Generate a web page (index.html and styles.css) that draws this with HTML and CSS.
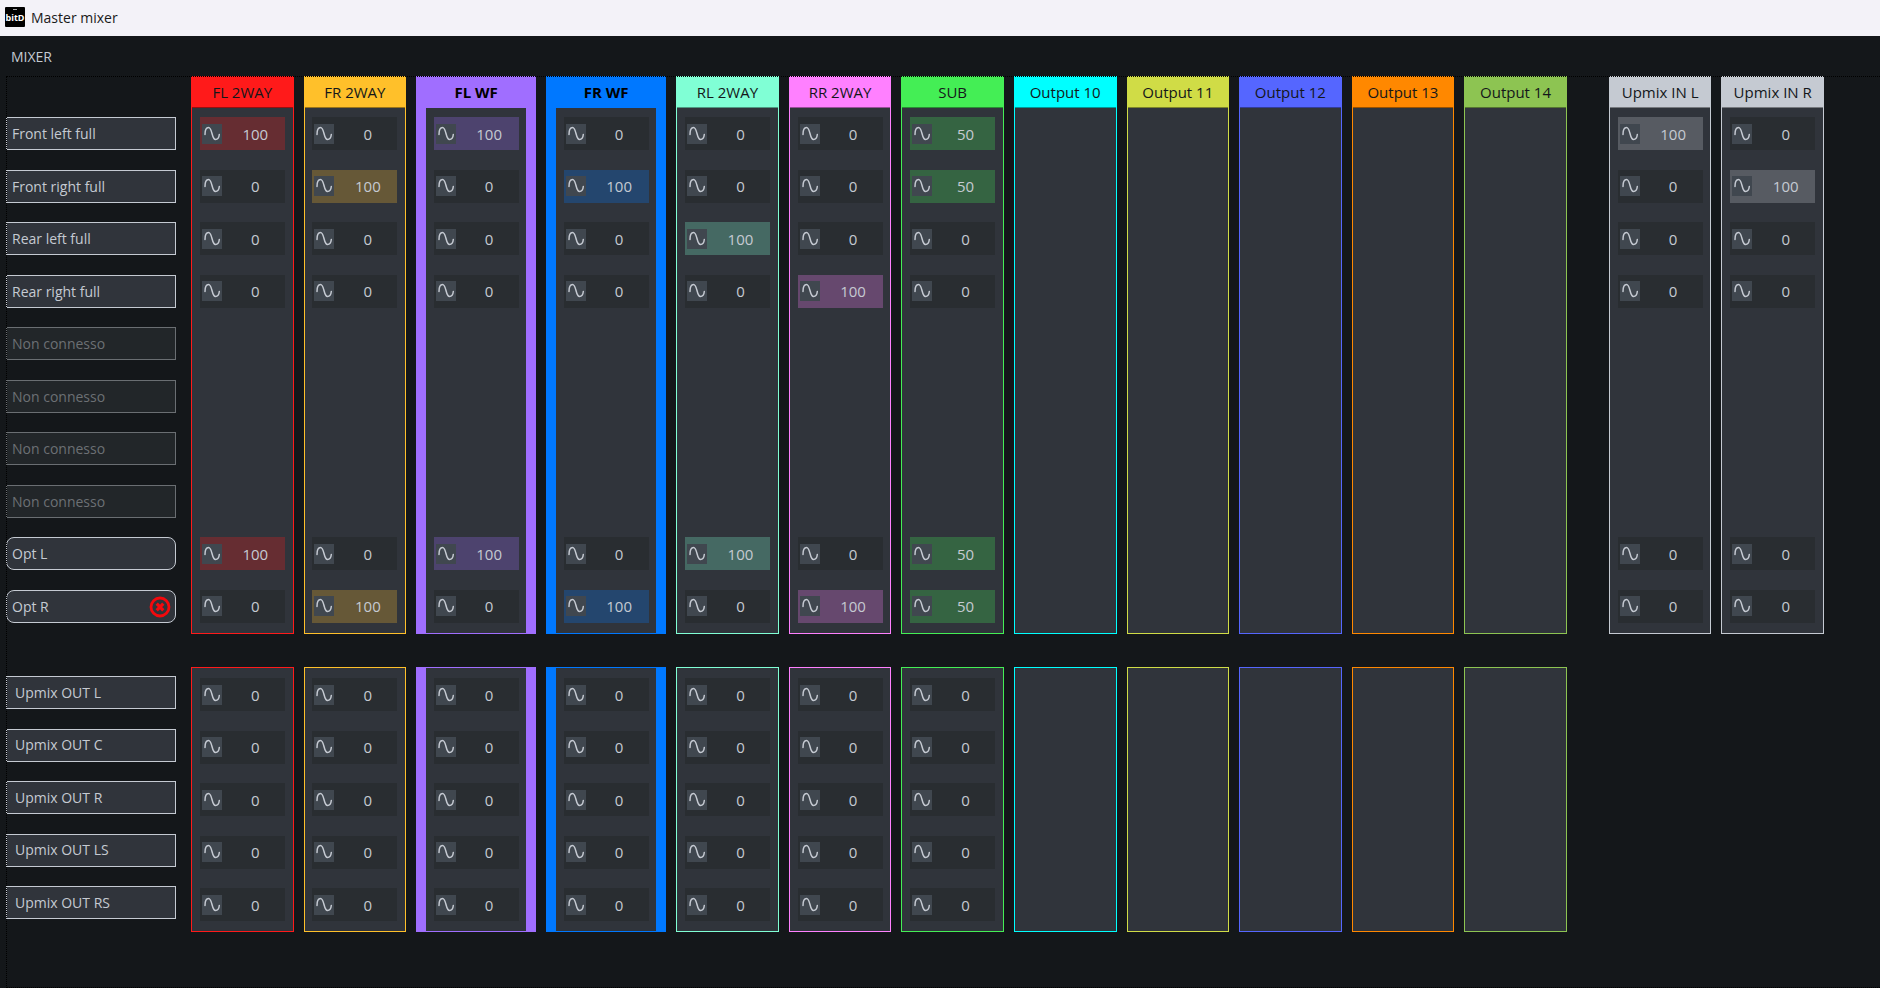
FILE: index.html
```html
<!DOCTYPE html>
<html lang="it">
<head>
  <meta charset="UTF-8" />
  <meta name="viewport" content="width=device-width, initial-scale=1.0" />
  <title>Master mixer</title>
  <link rel="stylesheet" href="styles.css">
</head>
<body>

  <!-- Window title bar -->
  <header class="titlebar">
    <svg class="logo" viewBox="0 0 20 20" role="img" aria-label="bitD">
      <rect width="20" height="20" rx="1" fill="#000" />
      <path d="M8 2.5h4" stroke="#aaa" />
      <text x="10" y="14" text-anchor="middle" class="logo-text">bitD</text>
    </svg>
    <span class="window-name">Master mixer</span>
  </header>

  <main class="window">
    <h1 class="title">MIXER</h1>
    <div class="mixer">
      <section class="matrix inputs" id="inputs">
        <div class="labels">
          <div class="label">Front left full</div>
          <div class="label">Front right full</div>
          <div class="label">Rear left full</div>
          <div class="label">Rear right full</div>
          <div class="label off">Non connesso</div>
          <div class="label off">Non connesso</div>
          <div class="label off">Non connesso</div>
          <div class="label off">Non connesso</div>
          <div class="label opt">Opt L</div>
          <div class="label opt">Opt R
            <button class="remove" aria-label="Remove Opt R">
              <svg viewBox="0 0 22 22">
                <circle cx="11" cy="11" r="9" fill="none" stroke="#f5090d" stroke-width="2.8" />
                <path d="M7.7 7.7l6.6 6.6M14.3 7.7l-6.6 6.6" stroke="#f5090d" stroke-width="3.2" />
              </svg>
            </button>
          </div>
        </div>
      </section>

      <section class="matrix upmix" id="upmix">
        <div class="labels">
          <div class="label">Upmix OUT L</div>
          <div class="label">Upmix OUT C</div>
          <div class="label">Upmix OUT R</div>
          <div class="label">Upmix OUT LS</div>
          <div class="label">Upmix OUT RS</div>
        </div>
      </section>
    </div>
  </main>

  <script src="script.js"></script>
</body>
</html>
```

FILE: styles.css
```css
* {
  box-sizing: border-box;
}

body {
  margin: 0;
  min-height: 100vh;
  display: flex;
  flex-direction: column;
  background-color: #14171a;
  color: #c5cad2;
  font-family: "Open Sans", "Noto Sans", sans-serif;
  font-size: 14px;
  line-height: 20px;
}

/* Title bar */
.titlebar {
  display: flex;
  align-items: center;
  gap: 6px;
  height: 36px;
  padding: 0 5px 2px;
  background-color: #f3f2f8;
  color: #1a1a1a;
}

.window-name {
  padding-top: 2px;
}

.logo {
  width: 20px;
  height: 20px;
}

.logo-text {
  fill: #fff;
  font-size: 9px;
  font-weight: bold;
}

.window {
  flex: 1;
  display: flex;
  flex-direction: column;
}

.title {
  margin: 0;
  padding: 11px 11px 9px;
  font-size: 14px;
  font-weight: normal;
}

/* Mixer area with its dotted outline on top */
.mixer {
  flex: 1;
  position: relative;
  margin-left: 6px;
}

.mixer::after {
  content: "";
  position: absolute;
  inset: 0;
  border: 1px dotted #000;
  border-right: none;
  pointer-events: none;
}

.matrix {
  display: grid;
  grid-template-columns: 175px repeat(2, 1fr) 120px 120px repeat(8, 1fr) 22px repeat(2, 1fr);
  column-gap: 10px;
  margin-right: 56px;
}

.inputs {
  height: 558px;
}

.upmix {
  height: 265px;
  margin-top: 33px;
}

/* Source names on the left */
.labels {
  display: flex;
  flex-direction: column;
  justify-content: space-between;
  padding: 41px 5px 11px 0;
}

.upmix .labels {
  padding: 9px 5px 13px 0;
}

.label {
  display: flex;
  align-items: center;
  justify-content: space-between;
  height: 33px;
  padding: 1px 4px 0 5px;
  border: 1px solid #c5cad2;
  background-color: #30343b;
}

.upmix .label {
  padding: 0 8px;
}

.label.off {
  border-color: #6a6e72;
  background-color: #222629;
  color: #6c7074;
}

.label.opt {
  border-radius: 8px;
}

.remove {
  width: 22px;
  height: 22px;
  padding: 0;
  border: none;
  background: none;
}

.remove svg {
  display: block;
}

/* Output channels */
.channel {
  display: flex;
  flex-direction: column;
  min-width: 0;
  border: 1px solid var(--color);
  background-color: #30343b;
}

.channel.selected {
  border-width: 1px 10px;
}

.channel.aux {
  grid-column-start: 15;
}

.name {
  height: 31px;
  padding: 5px 0;
  border-bottom: 1px solid rgba(0, 0, 0, 0.4);
  background-color: var(--color);
  color: #14171a;
  font-size: 15px;
  text-align: center;
}

.selected .name {
  border-bottom: none;
  color: #000;
  font-weight: bold;
}

.cells {
  flex: 1;
  display: flex;
  flex-direction: column;
  align-items: center;
  justify-content: space-between;
  padding: 9px 0 10px;
}

.upmix .cells {
  padding: 10px 0;
}

.cell {
  display: flex;
  align-items: center;
  width: 85px;
  height: 33px;
  padding-left: 2px;
  background-color: #292d31;
}

.cell.active {
  background-color: color-mix(in srgb, var(--color) 26%, #30343b);
}

.cell.empty {
  visibility: hidden;
}

.phase {
  width: 20px;
  height: 20px;
  padding: 0;
  border: none;
  background-color: #40474f;
}

.phase svg {
  display: block;
  fill: none;
  stroke: #c5cad2;
  stroke-width: 1.5;
  stroke-linecap: round;
}

.level {
  width: 63px;
  padding: 0 0 0 4px;
  border: none;
  background: none;
  color: inherit;
  font: inherit;
  font-size: 15px;
  text-align: center;
}
```

FILE: script.js
```js
// Levels of each channel: 4 analog inputs, then Opt L and Opt R
const channels = [
  { name: 'FL 2WAY', color: '#ff1a1a', levels: [100, 0, 0, 0, 100, 0] },
  { name: 'FR 2WAY', color: '#ffc02a', levels: [0, 100, 0, 0, 0, 100] },
  { name: 'FL WF', color: '#a06eff', levels: [100, 0, 0, 0, 100, 0], selected: true },
  { name: 'FR WF', color: '#0078ff', levels: [0, 100, 0, 0, 0, 100], selected: true },
  { name: 'RL 2WAY', color: '#80ffd5', levels: [0, 0, 100, 0, 100, 0] },
  { name: 'RR 2WAY', color: '#ff80ff', levels: [0, 0, 0, 100, 0, 100] },
  { name: 'SUB', color: '#44ee55', levels: [50, 50, 0, 0, 50, 50] },
  { name: 'Output 10', color: '#00ffff' },
  { name: 'Output 11', color: '#d0dc46' },
  { name: 'Output 12', color: '#5566ff' },
  { name: 'Output 13', color: '#ff8800' },
  { name: 'Output 14', color: '#8dc452' }
];

const upmixInputs = [
  { name: 'Upmix IN L', color: '#c5cad2', levels: [100, 0, 0, 0, 0, 0], aux: true },
  { name: 'Upmix IN R', color: '#c5cad2', levels: [0, 100, 0, 0, 0, 0] }
];

const wave = '<svg viewBox="0 0 20 20"><path d="M3 10.5C3 6 4.5 3.5 6.5 3.5C10.5 3.5 9.5 15.5 13.5 15.5C15.8 15.5 17 13.5 17.3 10.5" /></svg>';

function cell(channel, value) {
  // inputs that are not connected have no cell
  if (value === null) {
    return '<div class="cell empty"></div>';
  }
  return '<div class="cell' + (value > 0 ? ' active' : '') + '">' +
    '<button class="phase" aria-label="Phase ' + channel + '">' + wave + '</button>' +
    '<input class="level" type="text" aria-label="Level ' + channel + '" value="' + value + '">' +
    '</div>';
}

function addChannel(parent, channel, levels, showName) {
  const el = document.createElement('div');
  el.className = 'channel';
  el.classList.toggle('selected', !!channel.selected);
  el.classList.toggle('aux', !!channel.aux);
  el.style.setProperty('--color', channel.color);
  el.innerHTML = (showName ? '<div class="name">' + channel.name + '</div>' : '') +
    '<div class="cells">' + levels.map(v => cell(channel.name, v)).join('') + '</div>';
  parent.appendChild(el);
}

const inputs = document.getElementById('inputs');
const upmix = document.getElementById('upmix');

channels.concat(upmixInputs).forEach(channel => {
  const l = channel.levels;
  const levels = l ? [...l.slice(0, 4), null, null, null, null, ...l.slice(4)] : [];
  addChannel(inputs, channel, levels, true);
});

channels.forEach(channel => {
  addChannel(upmix, channel, channel.levels ? [0, 0, 0, 0, 0] : [], false);
});
```
